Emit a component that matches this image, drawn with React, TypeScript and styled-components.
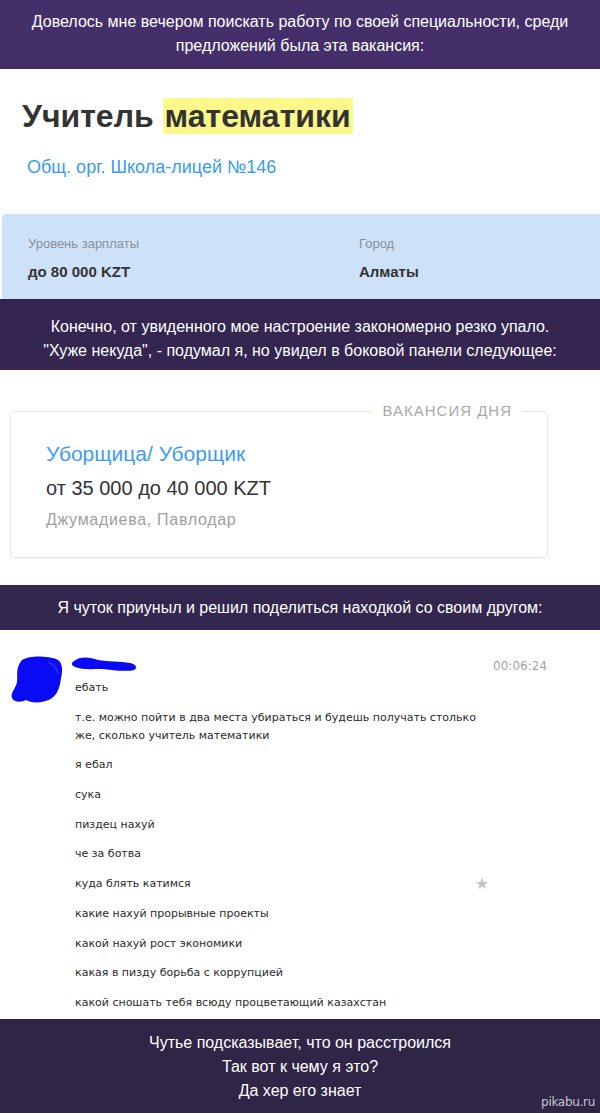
import React from "react";
import styled, { createGlobalStyle } from "styled-components";

const Global = createGlobalStyle`
  html, body { margin: 0; padding: 0; background: #ffffff; }
  body { width: 600px; font-family: "Liberation Sans", Arial, sans-serif; }
`;

const Page = styled.div`
  width: 600px;
  display: flex;
  flex-direction: column;
`;

const Banner = styled.div<{ $bg: string; $pt: number; $pb: number }>`
  background: ${(p) => p.$bg};
  color: #ffffff;
  font-family: "Liberation Sans", Arial, sans-serif;
  font-size: 16px;
  line-height: 24px;
  text-align: center;
  padding: ${(p) => p.$pt}px 16px ${(p) => p.$pb}px;
  position: relative;
`;

const Watermark = styled.span`
  position: absolute;
  right: 5px;
  bottom: 5px;
  font-size: 12px;
  line-height: 14px;
  color: #c9c6d2;
  font-family: "DejaVu Sans", sans-serif;
  letter-spacing: -0.3px;
`;

const JobHead = styled.div`
  padding: 27px 0 36px 22px;
  display: flex;
  flex-direction: column;
  align-items: flex-start;
  gap: 20px;
`;

const JobTitle = styled.h1`
  margin: 0;
  font-family: "Liberation Sans", Arial, sans-serif;
  font-size: 32px;
  line-height: 40px;
  font-weight: 700;
  color: #333333;
`;

const Mark = styled.span`
  background: #fcf98a;
  padding: 0 2px;
`;

const OrgLink = styled.a`
  margin-left: 5px;
  font-size: 18px;
  line-height: 22px;
  color: #3a9af3;
  text-decoration: none;
`;

const InfoBox = styled.div`
  margin-left: 2px;
  background: #cde2f9;
  border-top-left-radius: 4px;
  padding: 21px 0 18px 26px;
  display: grid;
  grid-template-columns: 331px 1fr;
  row-gap: 10px;
`;

const InfoLabel = styled.div`
  font-size: 13px;
  line-height: 17px;
  color: #8a8f96;
`;

const InfoValue = styled.div`
  font-size: 15px;
  line-height: 19px;
  font-weight: 700;
  color: #333333;
`;

const CardArea = styled.div`
  padding: 41px 52px 27px 10px;
`;

const Card = styled.div`
  position: relative;
  border: 1px solid #e6e6e6;
  border-radius: 5px;
  box-shadow: 0 1px 2px rgba(0, 0, 0, 0.04);
  padding: 30px 20px 27px 35px;
  display: flex;
  flex-direction: column;
`;

const CardLegend = styled.span`
  position: absolute;
  top: -10px;
  right: 25px;
  background: #ffffff;
  padding: 0 10px;
  font-size: 15px;
  line-height: 18px;
  letter-spacing: 1px;
  color: #a9a9a9;
  text-transform: uppercase;
`;

const CardTitle = styled.a`
  font-size: 21px;
  line-height: 24px;
  color: #3d9bf5;
  text-decoration: none;
`;

const CardSalary = styled.div`
  margin-top: 10px;
  font-size: 20px;
  line-height: 24px;
  color: #333333;
`;

const CardPlace = styled.div`
  margin-top: 10px;
  font-size: 16px;
  line-height: 20px;
  letter-spacing: 0.7px;
  color: #a0a0a0;
`;

const Chat = styled.div`
  padding: 24px 53px 7px 8px;
  display: grid;
  grid-template-columns: 60px 1fr;
  grid-template-rows: 25px auto;
  font-family: "DejaVu Sans", Verdana, sans-serif;
`;

const AvatarCell = styled.div`
  grid-row: 1 / span 2;
`;

const ChatHeader = styled.div`
  display: flex;
  justify-content: space-between;
  align-items: flex-start;
`;

const Time = styled.span`
  margin-top: 4px;
  font-size: 12px;
  line-height: 16px;
  color: #a3a3a3;
`;

const Messages = styled.div`
  padding-left: 7px;
  display: flex;
  flex-direction: column;
  gap: 11.7px;
`;

const Message = styled.div`
  width: 414px;
  display: flex;
  justify-content: space-between;
  align-items: center;
  font-size: 11px;
  line-height: 18px;
  color: #2b2b2b;
`;

const Star = styled.span`
  color: #c4c4c4;
  font-size: 16px;
  line-height: 18px;
  font-family: "DejaVu Sans", sans-serif;
`;

const messages: { text: React.ReactNode; star?: boolean }[] = [
  { text: "ебать" },
  {
    text: (
      <>
        т.е. можно пойти в два места убираться и будешь получать столько
        <br />
        же, сколько учитель математики
      </>
    ),
  },
  { text: "я ебал" },
  { text: "сука" },
  { text: "пиздец нахуй" },
  { text: "че за ботва" },
  { text: "куда блять катимся", star: true },
  { text: "какие нахуй прорывные проекты" },
  { text: "какой нахуй рост экономики" },
  { text: "какая в пизду борьба с коррупцией" },
  { text: "какой сношать тебя всюду процветающий казахстан" },
];

const AvatarBlob = () => (
  <svg width="58" height="52" viewBox="0 0 58 52">
    <path
      d="M14 6 C22 1 40 2 48 5 C55 8 55 16 53 24 C52 32 50 40 44 44 C37 49 24 50 18 46 C14 48 6 49 4 44 C2 39 8 34 9 28 C10 22 7 14 14 6 Z"
      fill="#0a0af5"
    />
    <path d="M40 8 C46 10 49 14 50 20" stroke="#5555ee" strokeWidth="2" fill="none" opacity="0.4" />
  </svg>
);

const NameBlob = () => (
  <svg width="72" height="20" viewBox="0 0 72 20">
    <path
      d="M6 7 C12 2 22 3 30 6 C40 8 52 7 62 9 C68 10 70 14 66 16 C58 18 44 16 34 15 C24 15 14 16 7 13 C3 11 3 9 6 7 Z"
      fill="#0a0af5"
    />
  </svg>
);

export default function App() {
  return (
    <Page>
      <Global />
      <Banner $bg="#452f6a" $pt={10} $pb={11}>
        Довелось мне вечером поискать работу по своей специальности, среди
        <br />
        предложений была эта вакансия:
      </Banner>

      <JobHead>
        <JobTitle>
          Учитель <Mark>математики</Mark>
        </JobTitle>
        <OrgLink href="#">Общ. орг. Школа-лицей №146</OrgLink>
      </JobHead>

      <InfoBox>
        <InfoLabel>Уровень зарплаты</InfoLabel>
        <InfoLabel>Город</InfoLabel>
        <InfoValue>до 80 000 KZT</InfoValue>
        <InfoValue>Алматы</InfoValue>
      </InfoBox>

      <Banner $bg="#342650" $pt={16} $pb={7}>
        Конечно, от увиденного мое настроение закономерно резко упало.
        <br />
        "Хуже некуда", - подумал я, но увидел в боковой панели следующее:
      </Banner>

      <CardArea>
        <Card>
          <CardLegend>Вакансия дня</CardLegend>
          <CardTitle href="#">Уборщица/ Уборщик</CardTitle>
          <CardSalary>от 35 000 до 40 000 KZT</CardSalary>
          <CardPlace>Джумадиева, Павлодар</CardPlace>
        </Card>
      </CardArea>

      <Banner $bg="#33274f" $pt={11} $pb={10}>
        Я чуток приуныл и решил поделиться находкой со своим другом:
      </Banner>

      <Chat>
        <AvatarCell>
          <AvatarBlob />
        </AvatarCell>
        <ChatHeader>
          <NameBlob />
          <Time>00:06:24</Time>
        </ChatHeader>
        <Messages>
          {messages.map((m, i) => (
            <Message key={i}>
              <span>{m.text}</span>
              {m.star && <Star>★</Star>}
            </Message>
          ))}
        </Messages>
      </Chat>

      <Banner $bg="#2f2546" $pt={12} $pb={11}>
        Чутье подсказывает, что он расстроился
        <br />
        Так вот к чему я это?
        <br />
        Да хер его знает
        <Watermark>pikabu.ru</Watermark>
      </Banner>
    </Page>
  );
}
